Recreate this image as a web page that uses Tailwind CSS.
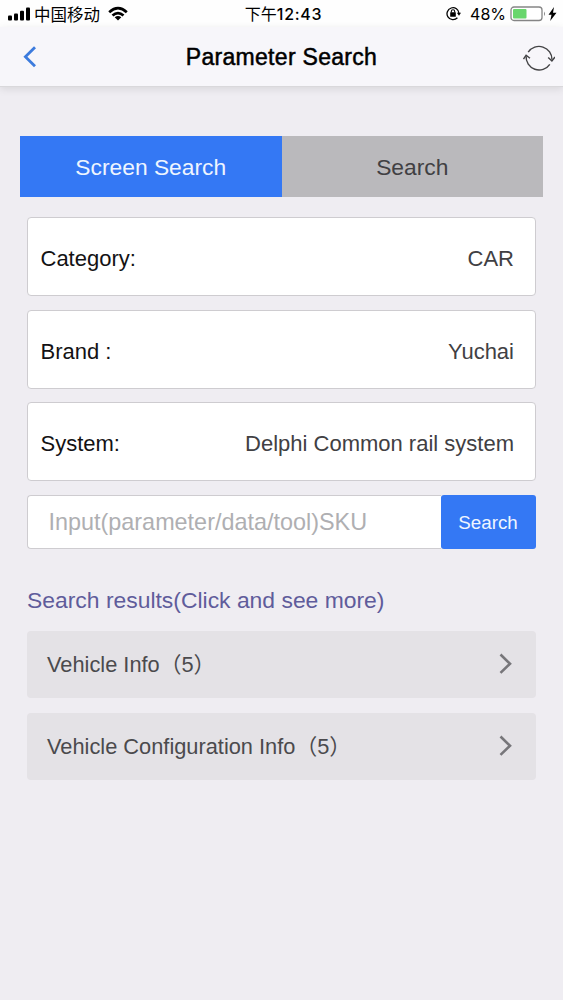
<!DOCTYPE html>
<html lang="en">
<head>
<meta charset="utf-8">
<meta name="viewport" content="width=device-width, initial-scale=1">
<title>Parameter Search</title>
<script src="https://cdn.jsdelivr.net/npm/@tailwindcss/browser@4"></script>
</head>
<body class="h-[1000px] overflow-hidden bg-[#efedf2] font-['Liberation_Sans','Noto_Sans_CJK_SC',sans-serif] text-[22px] text-[#414043]">
  <!-- Status bar -->
  <div class="flex h-[27px] items-center bg-[#fefefe] pl-2 pr-[6px] text-black">
    <div class="flex flex-1 items-center">
      <svg class="h-[14px] w-[22px]" viewBox="0 0 22 14"><rect x="0" y="8.5" width="4" height="5" rx="1"/><rect x="6" y="6.5" width="4" height="7" rx="1"/><rect x="12" y="3.8" width="4" height="9.7" rx="1"/><rect x="18" y="0.5" width="4" height="13" rx="1"/></svg>
      <span class="ml-[4px] pt-px font-['Noto_Sans_CJK_SC',sans-serif] text-[16.5px] leading-[27px]">中国移动</span>
      <svg class="ml-[8px] h-[15px] w-5" viewBox="0 0 20 15" fill="none" stroke="#000" stroke-width="2.7"><path d="M1.2 6.2Q10-1.8 18.8 6.2M4.5 9.6Q10 4.6 15.5 9.6"/><path d="M6.7 11.2Q10 8.6 13.3 11.2L10 14.6Z" fill="#000" stroke="none"/></svg>
    </div>
    <span class="pl-[2px] pt-px font-['Inter','Noto_Sans_CJK_SC',sans-serif] text-[16px] leading-[27px]">下午<span class="font-medium tracking-[0.7px]">12:43</span></span>
    <div class="flex flex-1 items-center justify-end">
      <svg class="h-[15px] w-[15px]" viewBox="0 0 15 15" fill="none" stroke="#000"><path d="M11.4 11.8A6 6 0 1 1 13 7.4" stroke-width="1.3"/><path d="M10.9 6.7H15L13 9.7Z" fill="#000" stroke="none"/><rect x="4.2" y="6.3" width="5.6" height="4.4" rx=".5" fill="#000" stroke="none"/><path d="M5.3 6.6V5.4a1.7 1.7 0 0 1 3.4 0V6.6" stroke-width="1.1"/></svg>
      <span class="ml-[9px] pt-px font-['Inter',sans-serif] text-[16px] leading-[27px]">48%</span>
      <svg class="ml-[4px] h-4 w-[36px]" viewBox="0 0 36 16"><rect x="1" y="1" width="31" height="13.5" rx="3" fill="#fff" stroke="#858585" stroke-width="1.3"/><rect x="3" y="3" width="13.5" height="9.5" rx="1" fill="#68d66c"/><path d="M34 5.5q2 2.3 0 4.6z" fill="#858585"/></svg>
      <svg class="ml-[2px] h-[14px] w-[9px]" viewBox="0 0 9 14"><path d="M6 0 .5 7.8h3L2.2 14 8.5 5.8H5Z"/></svg>
    </div>
  </div>
  <!-- Navigation bar -->
  <header class="grid h-[60px] grid-cols-[1fr_auto_1fr] items-center border-b border-[#d9d8db] bg-[#f7f6fa] pl-[8px] pr-2 shadow-[0_2px_8px_rgba(0,0,0,0.10)]">
    <svg class="ml-[15px] h-[22px] w-[32px]" viewBox="0 0 32 22" fill="none" stroke="#3c7bdd" stroke-width="2.8"><path d="M12 1.3 2.4 10.8 12 20.3"/></svg>
    <h1 class="pt-px text-[23px] leading-[26px] text-black [-webkit-text-stroke:0.5px_#000] tracking-[0.3px]">Parameter Search</h1>
    <svg class="mt-[3px] h-7 w-8 justify-self-end" viewBox="0 0 32 28" fill="none" stroke="#434345" stroke-width="1.4"><path d="M5.2 8.2A13 13 0 0 1 29 15.8M26.8 20.3A13 13 0 0 1 3.1 12.1"/><path d="M25.2 13.5 28.9 17 32 13M.5 15 3.1 11.2 7 14.2"/></svg>
  </header>
  <main class="px-[27px] pt-[49px]">
    <div class="-mx-[7px] grid h-[61px] grid-cols-2 text-[22.8px]">
      <button class="bg-[#3478f4] pt-px text-[#eef5ff]">Screen Search</button>
      <button class="bg-[#bab9bc] pt-px">Search</button>
    </div>
    <div class="mt-[20px] flex flex-col gap-[13.5px]">
      <div class="flex h-[79px] items-center justify-between rounded-[4px] border border-[#ceccd0] bg-white pl-[12.5px] pr-[21px] pt-[4px]"><span class="text-[#131214]">Category:</span><span>CAR</span></div>
      <div class="flex h-[79px] items-center justify-between rounded-[4px] border border-[#ceccd0] bg-white pl-[12.5px] pr-[21px] pt-[4px]"><span class="text-[#131214]">Brand :</span><span>Yuchai</span></div>
      <div class="flex h-[79px] items-center justify-between rounded-[4px] border border-[#ceccd0] bg-white pl-[12.5px] pr-[21px] pt-[4px]"><span class="text-[#131214]">System:</span><span>Delphi Common rail system</span></div>
      <div class="flex h-[54px]">
        <input class="min-w-0 flex-1 rounded-l-[4px] border border-r-0 border-[#ceccd0] bg-white pl-[20.5px] pt-[2px] text-[23.4px] placeholder:text-[#afafb2]" placeholder="Input(parameter/data/tool)SKU">
        <button class="w-[95px] rounded-[3px] bg-[#3478f4] pt-[3px] pr-[1px] text-[18.8px] text-[#eef5ff]">Search</button>
      </div>
    </div>
    <h2 class="mt-[38px] text-[22.9px] leading-[26px] text-[#5f5c9b]">Search results(Click and see more)</h2>
    <div class="mt-[18px] flex flex-col gap-[15px]">
      <div class="flex h-[67px] items-center justify-between rounded-[4px] bg-[#e4e2e6] pl-5 pr-[24px] text-[#4b4a4d]"><span class="pt-[2px] text-[21.8px] leading-[28px]">Vehicle Info（5）</span><svg class="h-[22px] w-[13px]" viewBox="0 0 13 22" fill="none" stroke="#77767a" stroke-width="2.6"><path d="M1.5 1.5 11 10.7 1.5 19.9"/></svg></div>
      <div class="flex h-[67px] items-center justify-between rounded-[4px] bg-[#e4e2e6] pl-5 pr-[24px] text-[#4b4a4d]"><span class="pt-[2px] text-[21.8px] leading-[28px]">Vehicle Configuration Info（5）</span><svg class="h-[22px] w-[13px]" viewBox="0 0 13 22" fill="none" stroke="#77767a" stroke-width="2.6"><path d="M1.5 1.5 11 10.7 1.5 19.9"/></svg></div>
    </div>
  </main>
</body>
</html>
